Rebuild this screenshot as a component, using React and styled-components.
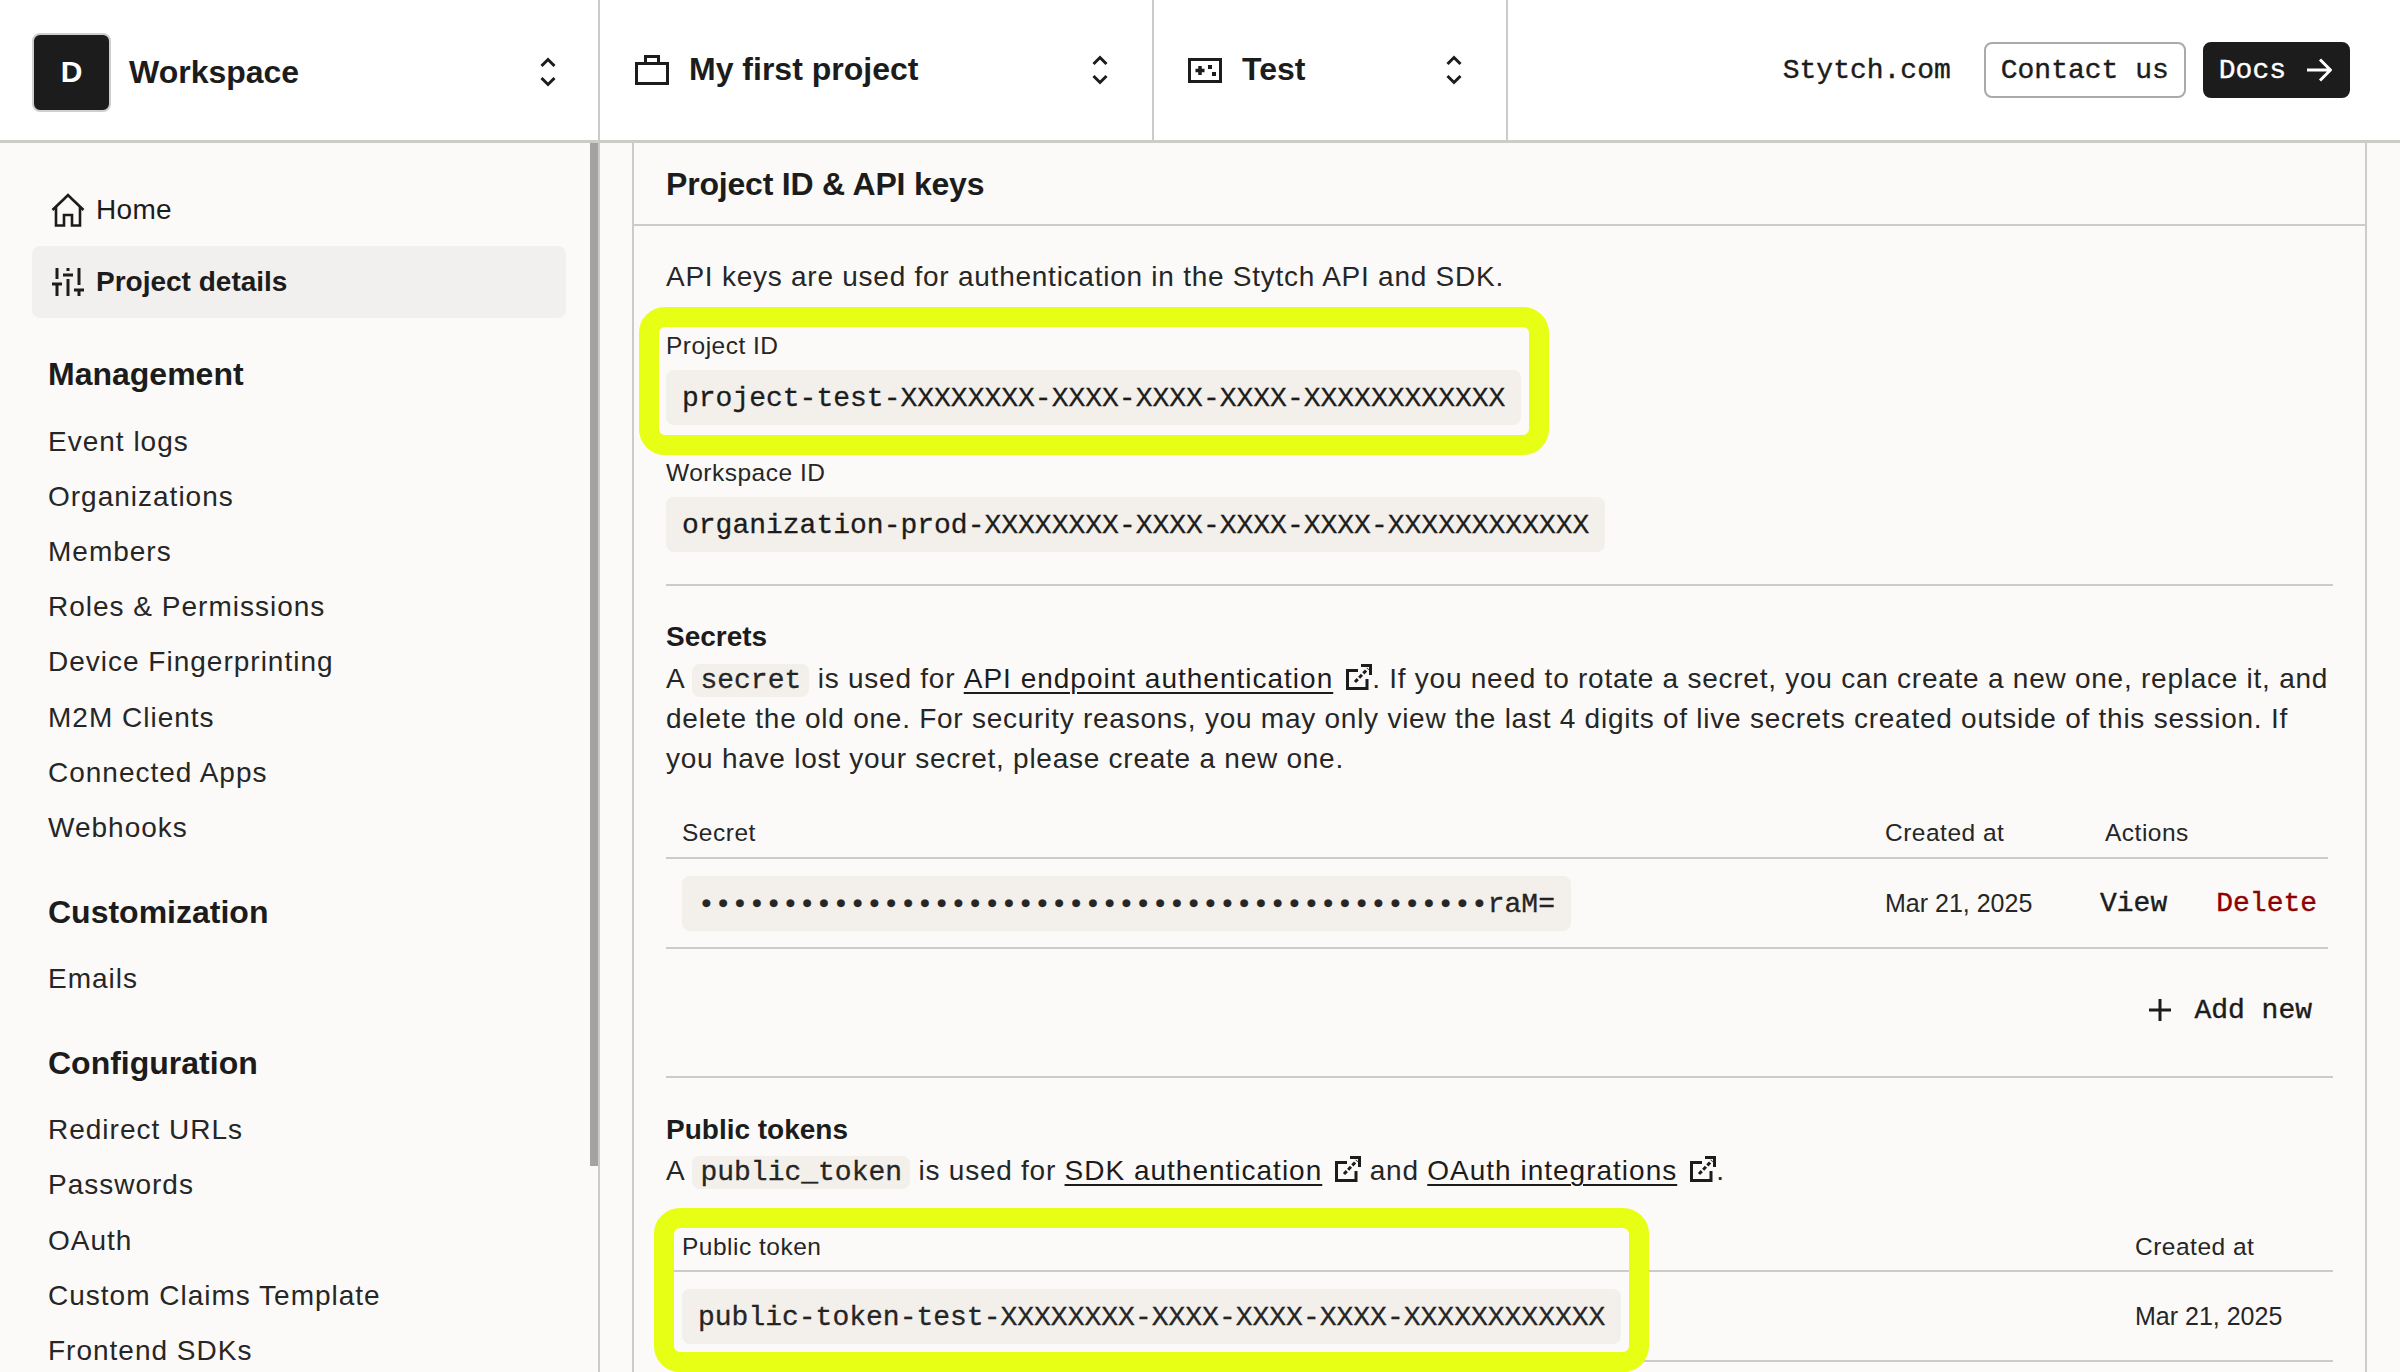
import React from "react";
import styled, { createGlobalStyle } from "styled-components";

const SANS = `"Liberation Sans", Arial, sans-serif`;
const MONO = `"Liberation Mono", "Courier New", monospace`;
const INK = "#1c1c1c";
const LINE = "#cccbc8";
const PAGE = "#fbfaf8";
const CODE = "#f3efea";
const NEON = "#e6ff14";

const Global = createGlobalStyle`
  html, body { margin: 0; padding: 0; background: ${PAGE}; overflow: hidden; }
  * { box-sizing: border-box; }
  body { font-family: ${SANS}; color: ${INK}; }
`;

const Page = styled.div`
  width: 2400px;
  height: 1372px;
  overflow: hidden;
  display: flex;
  flex-direction: column;
`;

const Header = styled.header`
  height: 143px;
  flex: none;
  display: flex;
  background: #fff;
  border-bottom: 3px solid ${LINE};
`;

const Switcher = styled.div`
  width: ${(p) => p.$width}px;
  flex: none;
  display: flex;
  align-items: center;
  padding: ${(p) => p.$pt || 0}px ${(p) => p.$right}px 0 ${(p) => p.$left}px;
  border-right: 2px solid ${LINE};
`;

const Avatar = styled.div`
  width: 79px;
  height: 79px;
  flex: none;
  display: flex;
  align-items: center;
  justify-content: center;
  background: ${INK};
  color: #fff;
  font-size: 30px;
  font-weight: 700;
  border: 2px solid #cfcfcf;
  border-radius: 8px;
  margin-right: 18px;
`;

const SwitcherName = styled.span`
  flex: 1;
  font-size: 32px;
  font-weight: 700;
  margin-left: ${(p) => p.$gap || 0}px;
  position: relative;
  top: ${(p) => p.$top || 0}px;
`;

const TopActions = styled.div`
  flex: 1;
  display: flex;
  align-items: center;
  justify-content: flex-end;
  padding: 0 50px 0 0;
  font-family: ${MONO};
  font-size: 28px;
`;

const TopLink = styled.span`
  margin-right: 33px;
  -webkit-text-stroke: 0.4px ${INK};
`;

const TopButton = styled.span`
  height: 56px;
  display: flex;
  align-items: center;
  gap: 21px;
  padding: ${(p) => (p.$dark ? "0 16px 0 14px" : "0 15px")};
  border-radius: 8px;
  -webkit-text-stroke: 0.4px ${(p) => (p.$dark ? "#fff" : INK)};
  border: 2px solid ${(p) => (p.$dark ? INK : "#aaa")};
  background: ${(p) => (p.$dark ? INK : "#fff")};
  color: ${(p) => (p.$dark ? "#fff" : INK)};
  margin-left: ${(p) => p.$gap || 0}px;
`;

const Body = styled.div`
  flex: 1;
  display: flex;
  min-height: 0;
`;

const Sidebar = styled.nav`
  width: 600px;
  flex: none;
  position: relative;
  overflow: hidden;
  padding: 31px 32px 0;
  border-right: 2px solid ${LINE};
  background: ${PAGE};
`;

const Thumb = styled.div`
  position: absolute;
  top: 0;
  right: 0;
  width: 8px;
  height: 1023px;
  background: #a3a3a3;
`;

const NavTop = styled.div`
  width: 534px;
  height: 72px;
  display: flex;
  align-items: center;
  gap: 11px;
  padding-left: 19px;
  border-radius: 8px;
  font-size: 28px;
  font-weight: ${(p) => (p.$active ? 700 : 400)};
  letter-spacing: ${(p) => (p.$active ? "0" : "0.3px")};
  background: ${(p) => (p.$active ? "#f1f0ee" : "transparent")};
`;

const NavSection = styled.section`
  margin-top: 36px;
  padding-left: 16px;
`;

const NavHeading = styled.h3`
  margin: 0 0 20px;
  font-size: 32px;
  line-height: 40px;
  font-weight: 700;
`;

const NavItem = styled.div`
  height: 55.2px;
  display: flex;
  align-items: center;
  font-size: 28px;
  letter-spacing: 1px;
  color: #262626;
`;

const Main = styled.main`
  flex: 1;
  min-width: 0;
  padding: 0 33px 0 32px;
`;

const Card = styled.div`
  height: 100%;
  border-left: 2px solid ${LINE};
  border-right: 2px solid ${LINE};
  background: ${PAGE};
`;

const CardHeader = styled.h2`
  margin: 0;
  height: 83px;
  display: flex;
  align-items: center;
  padding: 1px 0 0 32px;
  border-bottom: 2px solid ${LINE};
  font-size: 32px;
  font-weight: 700;
  letter-spacing: -0.2px;
`;

const CardBody = styled.div`
  padding: 31px 32px 0;
`;

const Text = styled.p`
  margin: ${(p) => p.$mt || 0}px 0 0;
  font-size: 28px;
  line-height: 40px;
  letter-spacing: 0.75px;
  color: #262626;
`;

const Field = styled.div`
  position: relative;
  margin-top: ${(p) => p.$mt}px;
  width: max-content;
`;

const FieldLabel = styled.div`
  font-size: 24.5px;
  line-height: 32px;
  letter-spacing: 0.5px;
  margin-bottom: 8px;
  color: #262626;
`;

const CodeBox = styled.div`
  display: inline-block;
  height: 55px;
  line-height: 57px;
  padding: 0 16px;
  border-radius: 8px;
  background: ${CODE};
  font-family: ${MONO};
  font-size: 28px;
  letter-spacing: 0;
  white-space: nowrap;
  vertical-align: top;
  -webkit-text-stroke: 0.3px ${INK};
`;

const Mark = styled.div`
  position: absolute;
  border: 20px solid ${NEON};
  border-radius: 26px;
  pointer-events: none;
  left: ${(p) => p.$left}px;
  top: ${(p) => p.$top}px;
  width: ${(p) => p.$width}px;
  height: ${(p) => p.$height}px;
`;

const Rule = styled.hr`
  margin: ${(p) => p.$mt}px 0 0;
  height: 2px;
  border: 0;
  background: ${LINE};
`;

const SubHeading = styled.h4`
  margin: ${(p) => p.$mt}px 0 0;
  font-size: 28px;
  line-height: 40px;
  font-weight: 700;
`;

const InlineCode = styled.code`
  padding: 1px 8px;
  line-height: 1;
  border-radius: 8px;
  background: ${CODE};
  font-family: ${MONO};
  font-size: 28px;
  letter-spacing: 0;
  -webkit-text-stroke: 0.3px ${INK};
`;

const DocLink = styled.a`
  color: ${INK};
  letter-spacing: 1px;
  text-decoration: underline;
  text-decoration-thickness: 2px;
  text-underline-offset: 4px;
`;

const LinkGlyph = styled.svg`
  width: 26px;
  height: 26px;
  margin-left: 13px;
  vertical-align: -2px;
`;

const Table = styled.div`
  position: relative;
  width: ${(p) => p.$width}px;
  margin-top: ${(p) => p.$mt}px;
`;

const Row = styled.div`
  display: grid;
  grid-template-columns: ${(p) => p.$cols};
  align-items: center;
  height: ${(p) => p.$height}px;
  border-bottom: 2px solid ${LINE};
`;

const HeadCell = styled.div`
  font-size: 24.5px;
  letter-spacing: 0.5px;
  color: #262626;
  padding-left: ${(p) => p.$pad || 0}px;
  padding-top: 2px;
`;

const Cell = styled.div`
  font-size: 25px;
  color: #262626;
  padding-left: ${(p) => p.$pad || 0}px;
`;

const Actions = styled.div`
  display: flex;
  gap: 49px;
  margin-left: -5px;
  font-family: ${MONO};
  font-size: 28px;
`;

const ActionLink = styled.span`
  color: ${(p) => (p.$danger ? "#8f0000" : INK)};
  -webkit-text-stroke: 0.4px ${(p) => (p.$danger ? "#8f0000" : INK)};
`;

const AddRow = styled.div`
  margin: 33px 16px 0 0;
  height: 56px;
  display: flex;
  align-items: center;
  justify-content: flex-end;
  gap: 23px;
  font-family: ${MONO};
  font-size: 28px;
  -webkit-text-stroke: 0.4px ${INK};
`;

const Chevrons = () => (
  <svg width="16" height="30" viewBox="0 0 16 30" fill="none" stroke={INK} strokeWidth="3" style={{ flex: "none" }}>
    <path d="M1.5 9 L8 2.5 L14.5 9" />
    <path d="M1.5 21 L8 27.5 L14.5 21" />
  </svg>
);

const BriefcaseIcon = () => (
  <svg width="34" height="30" viewBox="0 0 34 30" fill="none" stroke={INK} strokeWidth="3" style={{ flex: "none" }}>
    <rect x="1.5" y="8.5" width="31" height="20" />
    <path d="M10.5 8.5 V1.5 H23.5 V8.5" />
  </svg>
);

const GameIcon = () => (
  <svg width="34" height="25" viewBox="0 0 34 25" fill="none" style={{ flex: "none" }}>
    <rect x="1.5" y="1.5" width="31" height="22" stroke={INK} strokeWidth="3" />
    <path d="M12 8 V17 M7.5 12.5 H16.5" stroke={INK} strokeWidth="3.5" />
    <rect x="20" y="7" width="4" height="4" fill={INK} />
    <rect x="24" y="14" width="4" height="4" fill={INK} />
  </svg>
);

const HomeIcon = () => (
  <svg width="34" height="34" viewBox="0 0 34 34" fill="none" stroke={INK} strokeWidth="2.6" style={{ flex: "none" }}>
    <path d="M1.5 17 L13 6 L17 2 L21 6 L32.5 17" />
    <path d="M5 14 V32.5 H13 V22 H21 V32.5 H29 V14" />
  </svg>
);

const SlidersIcon = () => (
  <svg width="34" height="30" viewBox="0 0 34 30" fill="none" stroke={INK} strokeWidth="3" style={{ flex: "none" }}>
    <path d="M6 1 V12 M1 17 H11 M6 17 V29" />
    <path d="M17 1 V4 M12 8 H22 M17 12 V29" />
    <path d="M28 1 V18 M23 23 H33 M28 23 V29" />
  </svg>
);

const ArrowIcon = () => (
  <svg width="25" height="24" viewBox="0 0 25 24" fill="none" stroke="#fff" strokeWidth="3">
    <path d="M0 12 H23 M13 1.5 L23.5 12 L13 22.5" />
  </svg>
);

const PlusIcon = () => (
  <svg width="22" height="22" viewBox="0 0 22 22" fill="none" stroke={INK} strokeWidth="3">
    <path d="M11 0 V22 M0 11 H22" />
  </svg>
);

const ExternalIcon = () => (
  <LinkGlyph viewBox="0 0 26 26" fill="none" stroke={INK} strokeWidth="3">
    <path d="M12 6.5 H1.5 V24.5 H21 V15" />
    <path d="M9 18 L22 4.5" strokeDasharray="4 2" />
    <path d="M15 1.5 H24.5 V11" />
  </LinkGlyph>
);

const sections = [
  ["Management", ["Event logs", "Organizations", "Members", "Roles & Permissions", "Device Fingerprinting", "M2M Clients", "Connected Apps", "Webhooks"]],
  ["Customization", ["Emails"]],
  ["Configuration", ["Redirect URLs", "Passwords", "OAuth", "Custom Claims Template", "Frontend SDKs"]],
];

const secretCols = "1219px 220px 1fr";
const tokenCols = "1469px 1fr";
const xs = "XXXXXXXX-XXXX-XXXX-XXXX-XXXXXXXXXXXX";

export default function App() {
  return (
    <Page>
      <Global />
      <Header>
        <Switcher $width={600} $left={32} $right={42} $pt={4}>
          <Avatar>D</Avatar>
          <SwitcherName>Workspace</SwitcherName>
          <Chevrons />
        </Switcher>
        <Switcher $width={554} $left={35} $right={44}>
          <BriefcaseIcon />
          <SwitcherName $gap={20} $top={-1}>My first project</SwitcherName>
          <Chevrons />
        </Switcher>
        <Switcher $width={354} $left={34} $right={44}>
          <GameIcon />
          <SwitcherName $gap={20} $top={-1}>Test</SwitcherName>
          <Chevrons />
        </Switcher>
        <TopActions>
          <TopLink>Stytch.com</TopLink>
          <TopButton>Contact us</TopButton>
          <TopButton $dark $gap={17}>Docs <ArrowIcon /></TopButton>
        </TopActions>
      </Header>
      <Body>
        <Sidebar>
          <Thumb />
          <NavTop><HomeIcon />Home</NavTop>
          <NavTop $active><SlidersIcon />Project details</NavTop>
          {sections.map(([title, items]) => (
            <NavSection key={title}>
              <NavHeading>{title}</NavHeading>
              {items.map((item) => <NavItem key={item}>{item}</NavItem>)}
            </NavSection>
          ))}
        </Sidebar>
        <Main>
          <Card>
            <CardHeader>Project ID &amp; API keys</CardHeader>
            <CardBody>
              <Text>API keys are used for authentication in the Stytch API and SDK.</Text>
              <Field $mt={33}>
                <FieldLabel>Project ID</FieldLabel>
                <CodeBox>project-test-{xs}</CodeBox>
                <Mark $left={-27} $top={-23} $width={910} $height={148} />
              </Field>
              <Field $mt={32}>
                <FieldLabel>Workspace ID</FieldLabel>
                <CodeBox>organization-prod-{xs}</CodeBox>
              </Field>
              <Rule $mt={32} />
              <SubHeading $mt={31}>Secrets</SubHeading>
              <Text $mt={2}>
                A <InlineCode>secret</InlineCode> is used for <DocLink>API endpoint authentication</DocLink><ExternalIcon />. If you need to rotate a secret, you can create a new one, replace it, and delete the old one. For security reasons, you may only view the last 4 digits of live secrets created outside of this session. If you have lost your secret, please create a new one.
              </Text>
              <Table $width={1662} $mt={28}>
                <Row $cols={secretCols} $height={52}>
                  <HeadCell $pad={16}>Secret</HeadCell>
                  <HeadCell>Created at</HeadCell>
                  <HeadCell>Actions</HeadCell>
                </Row>
                <Row $cols={secretCols} $height={90}>
                  <Cell $pad={16}><CodeBox>{"•".repeat(47)}raM=</CodeBox></Cell>
                  <Cell>Mar 21, 2025</Cell>
                  <Actions>
                    <ActionLink>View</ActionLink>
                    <ActionLink $danger>Delete</ActionLink>
                  </Actions>
                </Row>
                <AddRow><PlusIcon />Add new</AddRow>
              </Table>
              <Rule $mt={38} />
              <SubHeading $mt={32}>Public tokens</SubHeading>
              <Text $mt={1}>
                A <InlineCode>public_token</InlineCode> is used for <DocLink>SDK authentication</DocLink><ExternalIcon /> and <DocLink>OAuth integrations</DocLink><ExternalIcon />.
              </Text>
              <Table $width={1667} $mt={30}>
                <Row $cols={tokenCols} $height={51}>
                  <HeadCell $pad={16}>Public token</HeadCell>
                  <HeadCell>Created at</HeadCell>
                </Row>
                <Row $cols={tokenCols} $height={90}>
                  <Cell $pad={16}><CodeBox>public-token-test-{xs}</CodeBox></Cell>
                  <Cell>Mar 21, 2025</Cell>
                </Row>
                <Mark $left={-12} $top={-13} $width={995} $height={164} />
              </Table>
            </CardBody>
          </Card>
        </Main>
      </Body>
    </Page>
  );
}
